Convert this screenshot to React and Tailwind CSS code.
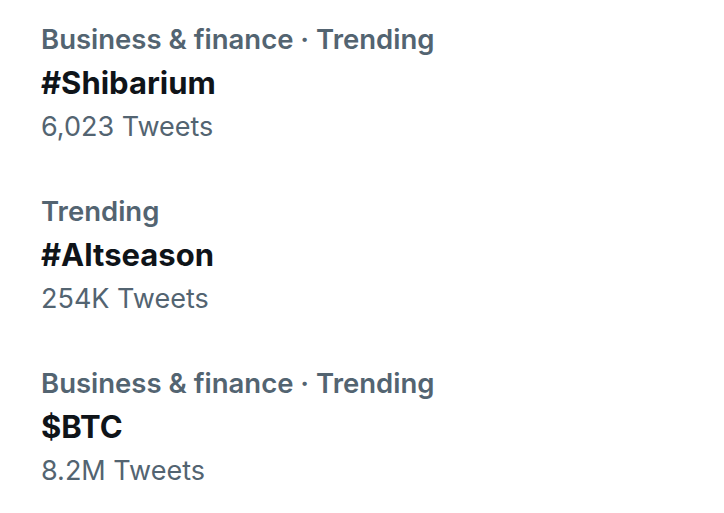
import React from 'react'

const trends = [
  { category: 'Business & finance · Trending', title: '#Shibarium', count: '6,023 Tweets' },
  { category: 'Trending', title: '#Altseason', count: '254K Tweets' },
  { category: 'Business & finance · Trending', title: '$BTC', count: '8.2M Tweets' },
]

export default function App() {
  return (
    <div className="w-[724px] h-[513px] bg-white pt-[17px] pl-[41px] font-['Inter',sans-serif]">
      <div className="flex flex-col gap-[40px]">
        {trends.map((t, i) => (
          <div key={i} className="flex flex-col">
            <div className="text-[27.5px] leading-[44px] font-semibold text-[#536471]">
              {t.category}
            </div>
            <div className="text-[31px] leading-[44px] font-bold text-[#0f1419]">
              {t.title}
            </div>
            <div className="text-[27px] leading-[44px] text-[#536471]">
              {t.count}
            </div>
          </div>
        ))}
      </div>
    </div>
  )
}
